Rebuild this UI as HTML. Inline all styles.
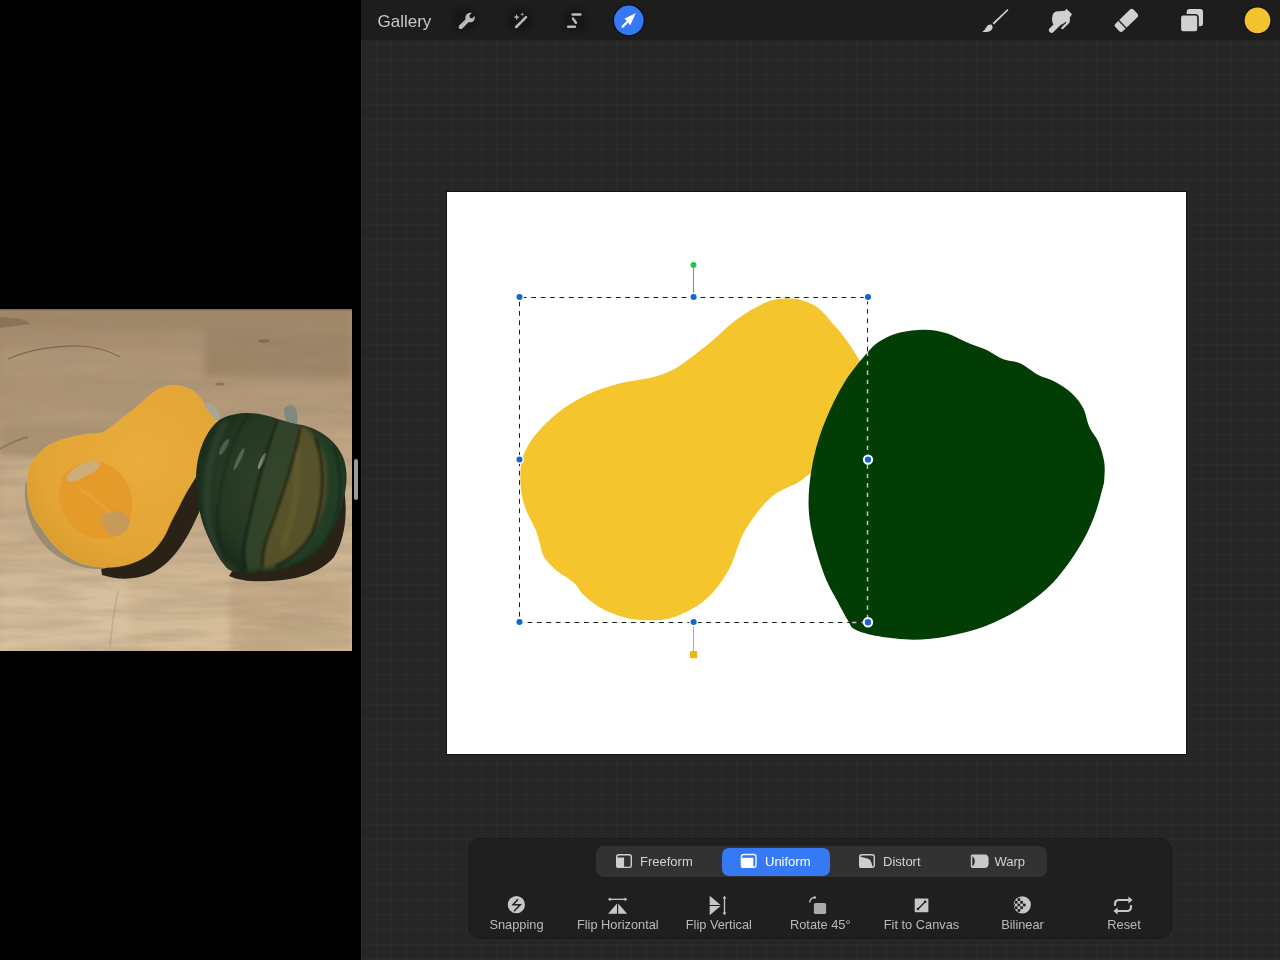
<!DOCTYPE html>
<html><head><meta charset="utf-8">
<style>
html,body{margin:0;padding:0;}
body{width:1280px;height:960px;background:#000;overflow:hidden;position:relative;font-family:"Liberation Sans",sans-serif;}
.abs{position:absolute;}
#app{left:361px;top:0;width:919px;height:960px;background-color:#262626;
background-image:linear-gradient(to right, rgba(255,255,255,0.022) 1px, transparent 1px),linear-gradient(to bottom, rgba(255,255,255,0.022) 1px, transparent 1px);
background-size:15px 15px;background-position:0 14px;}
#topbar{left:361px;top:0;width:919px;height:40px;background:#1d1d1d;}
#canvas{left:447px;top:192px;width:739px;height:562px;background:#fff;box-shadow:0 0 0 1px #121212;}
#panel{left:469px;top:839px;width:701.5px;height:99px;border-radius:12px;background:#1f1f1f;box-shadow:0 0 0 1px #1a1a1a;}
#seg{left:595.5px;top:845.5px;width:451px;height:31.5px;border-radius:8px;background:#323232;}
#pill{left:722px;top:847.5px;width:107.5px;height:28px;border-radius:7px;background:#3579f5;}
#photo{left:0;top:309px;width:352px;height:342px;overflow:hidden;}
#handle{left:354px;top:459px;width:4px;height:41px;border-radius:2px;background:#9b9b9b;}
svg.full{position:absolute;left:0;top:0;width:1280px;height:960px;}
</style></head>
<body>
<div id="photo" class="abs">
<svg width="352" height="342" viewBox="0 0 352 342">
<defs>
<linearGradient id="wood" x1="0" y1="0" x2="0.12" y2="1">
<stop offset="0" stop-color="#a4896b"/>
<stop offset="0.25" stop-color="#ae9373"/>
<stop offset="0.5" stop-color="#c2a684"/>
<stop offset="0.75" stop-color="#cdb390"/>
<stop offset="1" stop-color="#d6bd9a"/>
</linearGradient>
<filter id="b1"><feGaussianBlur stdDeviation="0.7"/></filter>
<filter id="b2"><feGaussianBlur stdDeviation="2"/></filter>
<filter id="b2s"><feGaussianBlur stdDeviation="1.1"/></filter>
<filter id="b3"><feGaussianBlur stdDeviation="3"/></filter>
<filter id="grain" x="0" y="0" width="100%" height="100%">
<feTurbulence type="fractalNoise" baseFrequency="0.012 0.09" numOctaves="3" seed="7" result="n"/>
<feColorMatrix in="n" type="matrix" values="0 0 0 0 0.35  0 0 0 0 0.27  0 0 0 0 0.18  0 0 0 1.6 -0.55"/>
</filter>
<radialGradient id="flesh" cx="0.6" cy="0.4" r="0.7">
<stop offset="0" stop-color="#e9ad3c"/>
<stop offset="0.75" stop-color="#e3a535"/>
<stop offset="1" stop-color="#da9b2e"/>
</radialGradient>
<radialGradient id="acg" cx="0.55" cy="0.45" r="0.6">
<stop offset="0" stop-color="#33432a"/>
<stop offset="0.7" stop-color="#243822"/>
<stop offset="1" stop-color="#182a18"/>
</radialGradient>
<clipPath id="acl"><path d="M228.0,107.0 C232.7,105.5 239.3,104.2 245.0,104.0 C250.7,103.8 256.5,104.5 262.0,105.5 C267.5,106.5 273.2,108.6 278.0,110.0 C282.8,111.4 286.3,112.8 291.0,114.0 C295.7,115.2 301.2,115.5 306.0,117.0 C310.8,118.5 315.5,120.3 320.0,123.0 C324.5,125.7 329.3,129.2 333.0,133.0 C336.7,136.8 339.8,141.5 342.0,146.0 C344.2,150.5 345.3,154.8 346.0,160.0 C346.7,165.2 346.7,171.0 346.0,177.0 C345.3,183.0 343.7,189.7 342.0,196.0 C340.3,202.3 338.5,209.2 336.0,215.0 C333.5,220.8 331.0,225.7 327.0,231.0 C323.0,236.3 317.5,242.7 312.0,247.0 C306.5,251.3 300.7,254.4 294.0,257.0 C287.3,259.6 279.3,261.3 272.0,262.5 C264.7,263.7 256.7,264.1 250.0,264.0 C243.3,263.9 236.7,263.8 232.0,262.0 C227.3,260.2 225.3,257.3 222.0,253.0 C218.7,248.7 215.2,242.3 212.0,236.0 C208.8,229.7 205.3,222.0 203.0,215.0 C200.7,208.0 199.2,200.7 198.0,194.0 C196.8,187.3 196.2,181.3 196.0,175.0 C195.8,168.7 196.2,162.0 197.0,156.0 C197.8,150.0 199.2,144.3 201.0,139.0 C202.8,133.7 205.3,128.3 208.0,124.0 C210.7,119.7 213.7,115.8 217.0,113.0 C220.3,110.2 223.3,108.5 228.0,107.0 Z"/></clipPath>
</defs>
<rect width="352" height="342" fill="url(#wood)"/>
<g filter="url(#b3)">
<path d="M0,0 L352,0 L352,22 L0,18 Z" fill="#9c8467" opacity="0.7"/>
<path d="M0,38 L200,42 L200,72 L0,68 Z" fill="#b39a7b" opacity="0.6"/>
<path d="M205,20 L352,24 L352,70 L205,66 Z" fill="#927a5d" opacity="0.6"/>
<path d="M0,78 L352,88 L352,108 L0,100 Z" fill="#ad9475" opacity="0.5"/>
<path d="M0,115 L120,118 L120,150 L0,146 Z" fill="#a28a6c" opacity="0.6"/>
<path d="M210,78 L352,82 L352,118 L210,112 Z" fill="#b59c7c" opacity="0.5"/>
<path d="M0,262 L130,264 L130,342 L0,342 Z" fill="#dcc6a6" opacity="0.5"/>
<path d="M230,270 L352,272 L352,342 L230,342 Z" fill="#b49772" opacity="0.45"/>
<path d="M0,150 L60,152 L60,240 L0,238 Z" fill="#d0b894" opacity="0.45"/>
</g>
<rect width="352" height="342" filter="url(#grain)" opacity="0.55"/>
<g filter="url(#b1)" fill="none" stroke="#6a553e" opacity="0.7">
<path d="M8,50 C30,40 60,36 80,37 C95,38 110,42 120,48" stroke-width="1.1"/>
<path d="M0,8 L22,10 L31,15 L0,19 Z" fill="#7a634a" stroke="none" opacity="0.8"/>
<ellipse cx="264" cy="32" rx="6" ry="1.8" fill="#6a553e" stroke="none" opacity="0.7"/><ellipse cx="220" cy="75" rx="5" ry="1.6" fill="#6a553e" stroke="none" opacity="0.7"/>
<path d="M0,140 C10,134 20,130 28,128" stroke-width="2" opacity="0.6"/>
<path d="M118,282 C114,300 112,318 110,338" stroke-width="1.6" opacity="0.25"/>
</g>
<!-- shadows -->
<path d="M204,146 C214,160 208,185 196,210 C184,236 170,256 150,265 C134,271 118,271 102,266 L100,250 L190,160 Z" fill="#2b2016" filter="url(#b1)"/>
<path d="M344,180 C348,205 345,230 334,248 C320,264 298,271 270,272 C254,273 240,272 229,267 L240,250 L330,200 Z" fill="#2b2016" filter="url(#b1)"/>
<!-- butternut rind -->
<path d="M27.5,173.0 C28.0,175.3 27.6,183.3 28.5,188.8 C29.4,194.3 30.6,200.6 33.0,206.0 C35.4,211.4 39.1,215.8 42.8,221.0 C46.4,226.2 50.3,232.3 55.0,237.0 C59.7,241.7 65.7,246.2 71.2,249.4 C76.7,252.6 82.0,254.5 88.0,256.0 C94.0,257.5 105.3,257.6 107.0,258.3 C108.7,259.0 102.2,260.1 98.0,260.0 C93.8,259.9 87.7,259.5 82.0,258.0 C76.3,256.5 69.8,254.2 64.0,251.0 C58.2,247.8 51.8,243.7 47.0,239.0 C42.2,234.3 38.2,228.5 35.0,223.0 C31.8,217.5 29.7,211.8 28.0,206.0 C26.3,200.2 25.4,193.2 25.0,188.0 C24.6,182.8 25.1,177.5 25.5,175.0 C25.9,172.5 27.0,170.7 27.5,173.0 Z" fill="#9a8b72" filter="url(#b1)"/>
<path d="M152.2,84.4 C156.6,81.3 160.4,79.2 164.4,77.9 C168.4,76.6 172.2,76.3 176.0,76.5 C179.8,76.7 183.6,77.7 187.0,79.0 C190.4,80.3 193.5,82.1 196.2,84.4 C198.9,86.7 200.8,90.0 203.0,93.0 C205.2,96.0 207.4,99.4 209.4,102.2 C211.4,105.0 213.6,107.5 215.0,109.7 C216.4,111.9 218.1,112.3 217.8,115.4 C217.5,118.4 215.0,122.4 213.0,128.0 C211.0,133.6 208.8,142.4 206.0,149.0 C203.2,155.6 199.3,161.6 196.0,167.4 C192.7,173.2 189.0,178.7 186.0,184.0 C183.0,189.3 180.7,194.3 178.0,199.5 C175.3,204.7 172.3,210.2 170.0,215.0 C167.7,219.8 166.6,223.7 163.9,228.0 C161.2,232.3 157.6,237.4 154.0,241.0 C150.4,244.6 147.2,246.9 142.5,249.4 C137.8,251.9 131.9,254.5 126.0,256.0 C120.1,257.5 113.3,258.3 107.0,258.3 C100.7,258.3 94.0,257.5 88.0,256.0 C82.0,254.5 76.7,252.6 71.2,249.4 C65.7,246.2 59.7,241.7 55.0,237.0 C50.3,232.3 46.4,226.2 42.8,221.0 C39.1,215.8 35.4,211.4 33.0,206.0 C30.6,200.6 29.4,194.3 28.5,188.8 C27.6,183.3 27.2,178.3 27.5,173.0 C27.8,167.7 27.5,162.4 30.0,157.0 C32.5,151.6 38.4,144.7 42.8,140.7 C47.1,136.7 51.3,135.1 56.0,133.0 C60.7,130.9 65.9,129.5 71.2,128.2 C76.5,126.9 82.7,125.9 88.0,125.0 C93.3,124.1 97.3,125.7 103.3,122.9 C109.3,120.0 118.2,112.3 124.0,107.9 C129.8,103.5 133.4,100.5 138.1,96.6 C142.8,92.7 147.8,87.5 152.2,84.4 Z" fill="url(#flesh)"/>
<path d="M152.2,84.4 C156.6,81.3 160.4,79.2 164.4,77.9 C168.4,76.6 172.2,76.3 176.0,76.5 C179.8,76.7 183.6,77.7 187.0,79.0 C190.4,80.3 193.5,82.1 196.2,84.4 C198.9,86.7 200.8,90.0 203.0,93.0 C205.2,96.0 207.4,99.4 209.4,102.2 C211.4,105.0 213.6,107.5 215.0,109.7 C216.4,111.9 218.1,112.3 217.8,115.4 C217.5,118.4 215.0,122.4 213.0,128.0 C211.0,133.6 208.8,142.4 206.0,149.0 C203.2,155.6 199.3,161.6 196.0,167.4 C192.7,173.2 189.0,178.7 186.0,184.0 C183.0,189.3 180.7,194.3 178.0,199.5 C175.3,204.7 172.3,210.2 170.0,215.0 C167.7,219.8 166.6,223.7 163.9,228.0 C161.2,232.3 157.6,237.4 154.0,241.0 C150.4,244.6 147.2,246.9 142.5,249.4 C137.8,251.9 131.9,254.5 126.0,256.0 C120.1,257.5 113.3,258.3 107.0,258.3 C100.7,258.3 94.0,257.5 88.0,256.0 C82.0,254.5 76.7,252.6 71.2,249.4 C65.7,246.2 59.7,241.7 55.0,237.0 C50.3,232.3 46.4,226.2 42.8,221.0 C39.1,215.8 35.4,211.4 33.0,206.0 C30.6,200.6 29.4,194.3 28.5,188.8 C27.6,183.3 27.2,178.3 27.5,173.0 C27.8,167.7 27.5,162.4 30.0,157.0 C32.5,151.6 38.4,144.7 42.8,140.7 C47.1,136.7 51.3,135.1 56.0,133.0 C60.7,130.9 65.9,129.5 71.2,128.2 C76.5,126.9 82.7,125.9 88.0,125.0 C93.3,124.1 97.3,125.7 103.3,122.9 C109.3,120.0 118.2,112.3 124.0,107.9 C129.8,103.5 133.4,100.5 138.1,96.6 C142.8,92.7 147.8,87.5 152.2,84.4 Z" fill="none" stroke="#e4b040" stroke-width="1" opacity="0.6"/>
<!-- seed cavity -->
<g filter="url(#b1)">
<path d="M62,170 C68,156 88,150 104,154 C122,160 134,178 132,200 C130,220 118,232 100,230 C82,228 64,214 60,196 C58,186 59,178 62,170 Z" fill="#e49a2a" opacity="0.9"/>
<path d="M66,168 C74,156 90,150 100,154 C102,160 92,164 80,170 C74,174 68,174 66,168 Z" fill="#c9b08a" opacity="0.85"/>
<path d="M100,208 C110,198 124,200 130,210 C130,222 120,230 108,226 Z" fill="#bf9a66" opacity="0.75"/>
<path d="M78,178 C90,186 100,196 112,204" stroke="#f0b050" stroke-width="3" fill="none" opacity="0.35"/>

</g>
<!-- stems -->
<path d="M207,93 C212,94 218,100 220,106 C221,110 219,112 216,111 C212,108 209,103 205,98 Z" fill="#a8a696" filter="url(#b1)"/>
<path d="M284,100 C286,96 292,95 295,98 C298,104 298,110 297,115 L287,115 C285,110 284,104 284,100 Z" fill="#7f8a7e" filter="url(#b1)"/>
<!-- acorn -->
<path d="M228.0,107.0 C232.7,105.5 239.3,104.2 245.0,104.0 C250.7,103.8 256.5,104.5 262.0,105.5 C267.5,106.5 273.2,108.6 278.0,110.0 C282.8,111.4 286.3,112.8 291.0,114.0 C295.7,115.2 301.2,115.5 306.0,117.0 C310.8,118.5 315.5,120.3 320.0,123.0 C324.5,125.7 329.3,129.2 333.0,133.0 C336.7,136.8 339.8,141.5 342.0,146.0 C344.2,150.5 345.3,154.8 346.0,160.0 C346.7,165.2 346.7,171.0 346.0,177.0 C345.3,183.0 343.7,189.7 342.0,196.0 C340.3,202.3 338.5,209.2 336.0,215.0 C333.5,220.8 331.0,225.7 327.0,231.0 C323.0,236.3 317.5,242.7 312.0,247.0 C306.5,251.3 300.7,254.4 294.0,257.0 C287.3,259.6 279.3,261.3 272.0,262.5 C264.7,263.7 256.7,264.1 250.0,264.0 C243.3,263.9 236.7,263.8 232.0,262.0 C227.3,260.2 225.3,257.3 222.0,253.0 C218.7,248.7 215.2,242.3 212.0,236.0 C208.8,229.7 205.3,222.0 203.0,215.0 C200.7,208.0 199.2,200.7 198.0,194.0 C196.8,187.3 196.2,181.3 196.0,175.0 C195.8,168.7 196.2,162.0 197.0,156.0 C197.8,150.0 199.2,144.3 201.0,139.0 C202.8,133.7 205.3,128.3 208.0,124.0 C210.7,119.7 213.7,115.8 217.0,113.0 C220.3,110.2 223.3,108.5 228.0,107.0 Z" fill="url(#acg)"/>
<g clip-path="url(#acl)">
<g filter="url(#b2)">
<path d="M277.0,111.0 C282.7,106.3 297.3,112.7 300.0,119.0 C302.7,125.3 296.0,138.3 293.0,149.0 C290.0,159.7 286.2,170.7 282.0,183.0 C277.8,195.3 271.3,210.7 268.0,223.0 C264.7,235.3 265.7,251.0 262.0,257.0 C258.3,263.0 248.7,264.7 246.0,259.0 C243.3,253.3 244.3,235.7 246.0,223.0 C247.7,210.3 252.7,195.7 256.0,183.0 C259.3,170.3 262.5,159.0 266.0,147.0 C269.5,135.0 271.3,115.7 277.0,111.0 Z" fill="#34442a" opacity="0.85"/>
<path d="M300.0,119.0 C303.7,115.5 310.8,122.3 315.0,128.0 C319.2,133.7 323.3,142.5 325.0,153.0 C326.7,163.5 327.0,179.3 325.0,191.0 C323.0,202.7 317.8,214.0 313.0,223.0 C308.2,232.0 302.2,239.3 296.0,245.0 C289.8,250.7 281.7,255.0 276.0,257.0 C270.3,259.0 263.3,262.7 262.0,257.0 C260.7,251.3 264.7,235.3 268.0,223.0 C271.3,210.7 277.8,195.3 282.0,183.0 C286.2,170.7 290.0,159.7 293.0,149.0 C296.0,138.3 296.3,122.5 300.0,119.0 Z" fill="#5e5529" opacity="0.85"/>
<path d="M315.0,128.0 C316.3,125.3 328.5,131.5 333.0,137.0 C337.5,142.5 340.3,151.2 342.0,161.0 C343.7,170.8 344.3,186.0 343.0,196.0 C341.7,206.0 338.2,213.2 334.0,221.0 C329.8,228.8 323.7,237.7 318.0,243.0 C312.3,248.3 307.0,250.7 300.0,253.0 C293.0,255.3 276.7,258.3 276.0,257.0 C275.3,255.7 289.8,250.7 296.0,245.0 C302.2,239.3 308.2,232.0 313.0,223.0 C317.8,214.0 323.0,202.7 325.0,191.0 C327.0,179.3 326.7,163.5 325.0,153.0 C323.3,142.5 313.7,130.7 315.0,128.0 Z" fill="#22402a" opacity="0.6"/>
<path d="M226,112 C210,140 204,175 208,212 C212,238 222,254 236,264" stroke="#3d4f40" stroke-width="6" fill="none" opacity="0.5"/>
<path d="M296,140 C300,170 295,205 282,238" stroke="#7a6a34" stroke-width="5" fill="none" opacity="0.45"/>
</g>
<g filter="url(#b1)">
<ellipse cx="262" cy="152" rx="2" ry="9" transform="rotate(25 262 152)" fill="#c0c8c0" opacity="0.6"/>
<ellipse cx="239" cy="150" rx="2" ry="12" transform="rotate(25 239 150)" fill="#8c9a98" opacity="0.45"/>
<ellipse cx="224" cy="138" rx="2.5" ry="9" transform="rotate(30 224 138)" fill="#7e8e8c" opacity="0.45"/>
</g>
<g filter="url(#b2s)" fill="none" stroke="#0c170c" opacity="0.7">
<path d="M277,112 C266,140 256,180 246,225 C242,245 244,255 246,260" stroke-width="2.2"/>
<path d="M300,119 C294,150 283,185 268,225 C262,240 262,252 262,258" stroke-width="2.4"/>
<path d="M315,128 C325,152 325,190 313,223 C304,240 292,250 276,257" stroke-width="2.4"/>
<path d="M333,137 C344,165 342,200 330,225 C320,242 306,252 292,258" stroke-width="1.8" opacity="0.7"/>
<path d="M248,106 C232,130 222,165 218,200 C216,220 220,240 226,252" stroke-width="1.6" opacity="0.5"/>
</g>
</g>
<rect x="0" y="0" width="352" height="1.5" fill="#6a5a48" opacity="0.6"/>
</svg>
</div>
<div id="handle" class="abs"></div>
<div id="app" class="abs"></div>
<div id="topbar" class="abs"></div>
<div id="canvas" class="abs"></div>
<div id="panel" class="abs"></div>
<div id="seg" class="abs"></div>
<div id="pill" class="abs"></div>

<svg class="full" viewBox="0 0 1280 960">
<!-- canvas shapes -->
<path d="M520.3,478.3 C520.3,472.0 520.5,465.4 522.2,459.3 C523.9,453.2 526.5,447.6 530.3,441.7 C534.1,435.8 539.6,429.7 545.2,424.1 C550.8,418.5 556.4,413.1 564.1,407.9 C571.8,402.7 582.1,397.0 591.2,393.0 C600.3,389.0 611.0,385.9 618.8,383.8 C626.5,381.6 631.2,381.2 637.5,380.0 C643.8,378.8 650.0,378.1 656.2,376.2 C662.5,374.4 668.8,372.2 675.0,368.8 C681.2,365.3 687.5,360.3 693.8,355.6 C700.0,350.9 706.2,345.9 712.5,340.6 C718.8,335.3 725.0,328.8 731.2,323.8 C737.5,318.8 743.8,314.4 750.0,310.6 C756.2,306.9 763.1,303.3 768.8,301.2 C774.4,299.2 778.8,298.7 783.8,298.4 C788.8,298.1 793.8,298.3 798.8,299.4 C803.8,300.5 809.4,302.5 813.8,305.0 C818.1,307.5 821.6,311.0 825.0,314.4 C828.4,317.8 831.7,322.5 834.4,325.6 C837.1,328.7 838.4,329.7 841.0,333.0 C843.6,336.3 847.0,340.8 850.0,345.2 C853.0,349.6 856.1,354.3 858.8,359.3 C861.5,364.3 865.5,366.6 866.0,375.0 C866.5,383.4 865.5,398.3 862.0,410.0 C858.5,421.7 851.2,435.7 845.0,445.0 C838.8,454.3 831.0,461.1 825.0,466.0 C819.0,470.9 813.7,471.5 809.0,474.4 C804.3,477.3 802.4,480.0 796.8,483.2 C791.2,486.4 782.1,489.1 775.6,493.8 C769.1,498.5 763.2,505.0 757.9,511.5 C752.6,518.0 747.2,526.3 743.7,532.8 C740.2,539.3 739.0,544.6 736.6,550.5 C734.2,556.4 733.1,561.7 729.6,568.2 C726.1,574.7 720.7,583.2 715.4,589.4 C710.1,595.6 704.9,600.7 697.7,605.4 C690.5,610.1 679.8,615.1 672.4,617.6 C665.0,620.1 660.2,620.1 653.4,620.3 C646.6,620.5 638.6,620.1 631.8,619.0 C625.0,617.9 618.7,615.9 612.8,613.6 C606.9,611.4 601.5,608.7 596.6,605.5 C591.7,602.3 586.7,598.2 583.1,594.6 C579.5,591.0 578.2,586.9 575.0,583.8 C571.8,580.6 567.5,578.2 564.1,575.7 C560.7,573.2 558.1,572.1 554.7,568.9 C551.3,565.7 546.3,561.0 543.8,556.7 C541.3,552.4 541.1,547.7 539.8,543.2 C538.4,538.7 537.7,534.7 535.7,529.7 C533.7,524.7 529.9,518.8 527.6,513.4 C525.4,508.0 523.4,503.0 522.2,497.2 C521.0,491.4 520.3,484.6 520.3,478.3 Z" fill="#f4c52c"/>
<path d="M900.0,332.5 C907.2,330.8 917.2,329.6 925.0,329.7 C932.8,329.8 940.3,331.4 946.7,333.3 C953.1,335.2 958.9,338.9 963.3,340.8 C967.7,342.8 969.4,343.5 973.3,345.0 C977.2,346.5 981.7,347.6 986.7,350.0 C991.7,352.4 997.8,357.0 1003.3,359.2 C1008.8,361.4 1014.2,360.7 1020.0,363.3 C1025.8,365.9 1032.5,371.9 1038.3,375.0 C1044.1,378.1 1049.4,378.6 1055.0,381.7 C1060.6,384.8 1067.0,388.9 1071.7,393.3 C1076.4,397.7 1080.4,402.7 1083.3,408.3 C1086.2,413.9 1086.7,421.1 1089.2,426.7 C1091.7,432.3 1095.8,435.9 1098.3,441.7 C1100.8,447.5 1103.2,455.3 1104.2,461.7 C1105.2,468.1 1104.5,475.6 1104.2,480.0 C1103.9,484.4 1103.9,483.0 1102.5,488.4 C1101.1,493.8 1098.5,504.5 1095.6,512.5 C1092.7,520.5 1089.9,528.0 1085.3,536.6 C1080.7,545.2 1074.4,555.4 1068.1,564.0 C1061.8,572.6 1055.5,580.6 1047.5,588.1 C1039.5,595.6 1030.3,602.5 1020.0,608.8 C1009.7,615.1 997.6,621.4 985.6,626.0 C973.6,630.6 959.8,634.0 947.8,636.3 C935.8,638.6 924.9,639.7 913.4,639.7 C901.9,639.7 888.7,638.0 879.0,636.3 C869.3,634.6 860.1,632.0 855.0,629.4 C849.9,626.8 851.0,625.4 848.1,620.8 C845.2,616.2 841.8,609.6 837.8,601.9 C833.8,594.2 828.4,585.9 824.1,574.4 C819.8,562.9 814.6,545.7 812.0,533.1 C809.4,520.5 808.3,511.4 808.6,498.8 C808.9,486.2 810.9,470.7 813.8,457.5 C816.7,444.3 820.6,432.3 825.8,419.7 C830.9,407.1 837.5,393.3 844.7,381.9 C851.9,370.4 862.6,358.0 868.8,351.0 C875.0,344.0 876.8,343.1 882.0,340.0 C887.2,336.9 892.8,334.2 900.0,332.5 Z" fill="#023d05"/>
<!-- selection -->
<g fill="none" stroke-width="1">
<rect x="519.5" y="297.5" width="348" height="325" stroke="rgba(225,255,225,0.8)" stroke-width="1.4" stroke-dasharray="4.7 4.7" stroke-dashoffset="2.3"/>
<rect x="519.5" y="297.5" width="348" height="325" stroke="#1c1c1c" stroke-dasharray="4.7 4.7" stroke-dashoffset="7"/>
</g>
<line x1="693.5" y1="265" x2="693.5" y2="297" stroke="#5aa85a" stroke-width="1"/>
<line x1="693.5" y1="622" x2="693.5" y2="652" stroke="#d9ae22" stroke-width="1"/>
<circle cx="693.5" cy="265" r="3" fill="#2cc24e"/>
<rect x="690" y="651" width="7.2" height="7.2" rx="1" fill="#f0b80c"/>
<g fill="#1566d0" stroke="#fff" stroke-width="1.5">
<circle cx="519.5" cy="297" r="3.8"/>
<circle cx="693.6" cy="297" r="3.8"/>
<circle cx="868" cy="297" r="3.8"/>
<circle cx="519.5" cy="459.5" r="3.8"/>
<circle cx="519.5" cy="622" r="3.8"/>
<circle cx="693.6" cy="622" r="3.8"/>
</g>
<g fill="#1566d0" stroke="#fff" stroke-width="2">
<circle cx="868" cy="459.6" r="4.2"/>
<circle cx="868" cy="622.3" r="4.2"/>
</g>

<!-- top bar -->
<text x="377.5" y="26.6" font-family="Liberation Sans" font-size="17" fill="#c9c9c9">Gallery</text>
<defs><filter id="cb"><feGaussianBlur stdDeviation="1.5"/></filter></defs>
<g fill="#151515" filter="url(#cb)">
<circle cx="465" cy="20" r="12.5"/>
<circle cx="520" cy="20" r="12.5"/>
<circle cx="574.5" cy="20.5" r="12.5"/>
</g>
<circle cx="628.8" cy="20.4" r="16" fill="#0d0f14"/>
<circle cx="628.8" cy="20.4" r="14.8" fill="#3579f4"/>
<!-- wrench -->
<g fill="#b9b9b9">
<path d="M459.2,25.6 L465.6,19.2 C465,17.1 465.6,14.9 467.4,13.7 C468.8,12.8 470.4,12.6 471.8,13.1 L469.3,15.6 L469.9,17.8 L472.2,18.4 L474.6,16 C475.1,17.4 474.9,19.1 474,20.4 C472.8,22 470.7,22.6 468.8,22.1 L462.4,28.5 C461.6,29.3 460.1,29.3 459.2,28.5 C458.4,27.7 458.4,26.4 459.2,25.6 Z"/>
</g>
<!-- magic wand -->
<g stroke="#b9b9b9" stroke-linecap="round" fill="none">
<line x1="516.2" y1="27" x2="520.8" y2="22.4" stroke-width="2.6"/>
<line x1="522.2" y1="21" x2="526" y2="17.2" stroke-width="2.6"/>
</g>
<g fill="#b9b9b9">
<path d="M516.6,14 L517.4,16.3 L519.7,17.1 L517.4,17.9 L516.6,20.2 L515.8,17.9 L513.5,17.1 L515.8,16.3 Z"/>
<path d="M522.2,12.2 L522.7,13.7 L524.2,14.2 L522.7,14.7 L522.2,16.2 L521.7,14.7 L520.2,14.2 L521.7,13.7 Z"/>
</g>
<!-- selection S -->
<g fill="#b9b9b9">
<rect x="571.4" y="13.3" width="10.2" height="2.5" rx="1.25"/>
<rect x="566.9" y="25.5" width="9.2" height="2.5" rx="1.25"/>
</g>
<line x1="573" y1="18.6" x2="575.9" y2="22.8" stroke="#b9b9b9" stroke-width="2.5" stroke-linecap="round"/>
<!-- arrow -->
<path d="M635.9,13.1 L624.4,18.8 L627.6,21.4 L630.2,25.4 Z" fill="#fff"/>
<line x1="628.6" y1="20.6" x2="622.6" y2="26.6" stroke="#fff" stroke-width="2.2" stroke-linecap="round"/>

<!-- right tools -->
<g fill="#d0d0d0">
<!-- brush -->
<path d="M1007,9.4 C1007.8,8.8 1008.6,9.6 1008.1,10.4 L994,24.4 L992.6,23 Z"/>
<path d="M991.6,24.8 C993.2,26.4 993,29.2 990.6,30.8 C988.6,32.2 985.2,32.4 982.2,31.8 C984.6,30.6 985.4,28.6 986.6,26.8 C987.8,25 990,24 991.6,24.8 Z"/>
<!-- smudge -->
<path d="M1056,11.5 L1065,10.8 L1066.4,8.8 L1072,14.2 L1069.8,17.5 L1069.8,21 L1060,25 L1053.4,24.6 C1052,22 1051.8,19.5 1052.2,17 C1052.6,14 1054,12 1056,11.5 Z"/>
</g>
<g stroke="#d0d0d0" stroke-linecap="round" fill="none">
<line x1="1051.6" y1="30.2" x2="1059.2" y2="22.6" stroke-width="5.4"/>
<line x1="1062.4" y1="27.4" x2="1068" y2="21.8" stroke-width="3.4"/>
</g>
<line x1="1058.6" y1="29.6" x2="1066" y2="22.2" stroke="#1d1d1d" stroke-width="1.2"/>
<!-- eraser -->
<g transform="translate(1126.4 20.4) rotate(-44)">
<rect x="-12.6" y="-5.3" width="25.2" height="10.6" rx="2.8" fill="#d0d0d0"/>
<line x1="-5.6" y1="-5.6" x2="-5.6" y2="5.6" stroke="#1d1d1d" stroke-width="1.3"/>
</g>
<!-- layers -->
<rect x="1186.7" y="9" width="16.3" height="17.3" rx="2.8" fill="#d0d0d0"/>
<rect x="1180.3" y="14.7" width="17.7" height="17.3" rx="2.8" fill="#d0d0d0" stroke="#1d1d1d" stroke-width="1.6"/>
<circle cx="1257.5" cy="20.4" r="13.6" fill="#f3c22f" stroke="#151515" stroke-width="1.5"/>

<!-- segmented icons -->
<g fill="none" stroke="#cfcfcf" stroke-width="1.4">
<rect x="616.7" y="854.8" width="14.6" height="12.6" rx="2.2"/>
<rect x="741.4" y="854.5" width="14.6" height="12.8" rx="2.2" stroke="#f2f6ff"/>
<rect x="859.7" y="854.7" width="14.6" height="12.6" rx="2.2"/>
</g>
<rect x="616.7" y="857.5" width="7.4" height="10.2" fill="#cfcfcf"/>
<rect x="741.4" y="857.8" width="12" height="10.2" fill="#fff"/>
<path d="M859.7,856.4 L868.2,858.8 C870.6,859.6 871.9,862.6 872.4,868 L859.7,868 Z" fill="#cfcfcf"/>
<path d="M972.6,854.4 L985,854.4 C987.2,854.4 988.6,856 988.6,858.8 L988.6,863.5 C988.6,866.3 987.2,867.9 985,867.9 L972.6,867.9 C971.4,867.9 970.8,867.3 970.8,866.2 L970.8,856.1 C970.8,855 971.4,854.4 972.6,854.4 Z" fill="#c9c9c9"/>
<path d="M972.3,856.2 C975.6,858.2 975.6,864.2 972.3,866.2 Z" fill="#2a2a2a"/>
<g font-family="Liberation Sans" font-size="13" fill="#d2d2d2">
<text x="640" y="866.3">Freeform</text>
<text x="765" y="866.3" fill="#fff">Uniform</text>
<text x="883" y="866.3">Distort</text>
<text x="994.5" y="866.3">Warp</text>
</g>

<!-- bottom row -->
<g font-family="Liberation Sans" font-size="12.8" fill="#bababa" text-anchor="middle">
<text x="516.5" y="929">Snapping</text>
<text x="617.8" y="929">Flip Horizontal</text>
<text x="718.8" y="929">Flip Vertical</text>
<text x="820.3" y="929">Rotate 45°</text>
<text x="921.5" y="929">Fit to Canvas</text>
<text x="1022.5" y="929">Bilinear</text>
<text x="1124" y="929">Reset</text>
</g>
<g fill="#c6c6c6">
<circle cx="516.4" cy="904.7" r="8.6"/>
<path d="M608,913.8 L617,903.6 L617,913.8 Z M618.2,903.6 L627.2,913.8 L618.2,913.8 Z"/>
<path d="M709.7,895.8 L720.6,905 L709.7,905 Z M709.7,906 L720.6,906 L709.7,915.3 Z"/>
<rect x="813.9" y="903" width="12.2" height="11.1" rx="1.6" fill="#ababab"/>
<rect x="914.7" y="898.6" width="13.7" height="13.6" rx="1"/>
<circle cx="1022.3" cy="904.8" r="8.6"/>
</g>
<path d="M518,899.2 L513,904.8 L520.2,904.8 L514,911.2" stroke="#1f1f1f" stroke-width="1.5" fill="none" stroke-linejoin="miter"/>
<g stroke="#c6c6c6" stroke-width="1.3" fill="none">
<line x1="609.5" y1="899.3" x2="625.7" y2="899.3"/>
<line x1="724.5" y1="897.5" x2="724.5" y2="913.6"/>
<path d="M809.6,902.4 C810.2,899.6 812,897.6 814.6,897.4" stroke-width="1.4"/>
</g>
<g fill="#c6c6c6">
<path d="M607.8,899.3 L610.6,897.4 L610.6,901.2 Z M627.4,899.3 L624.6,897.4 L624.6,901.2 Z"/>
<path d="M724.5,895.8 L722.6,898.6 L726.4,898.6 Z M724.5,915.3 L722.6,912.5 L726.4,912.5 Z"/>
<circle cx="814.8" cy="897.4" r="1.2"/>
</g>
<line x1="918" y1="909" x2="925.2" y2="901.8" stroke="#1f1f1f" stroke-width="1.3"/>
<g fill="#1f1f1f">
<circle cx="918" cy="909" r="1.3"/><circle cx="925.2" cy="901.8" r="1.3"/>
</g>
<defs><clipPath id="bcl"><circle cx="1022.3" cy="904.8" r="8.6"/></clipPath></defs>
<g fill="#1f1f1f" clip-path="url(#bcl)"><rect x="1017.55" y="898.25" width="2.7" height="2.7"/><rect x="1014.85" y="900.95" width="2.7" height="2.7"/><rect x="1020.25" y="900.95" width="2.7" height="2.7"/><rect x="1017.55" y="903.65" width="2.7" height="2.7"/><rect x="1022.95" y="903.65" width="2.7" height="2.7"/><rect x="1014.85" y="906.35" width="2.7" height="2.7"/><rect x="1020.25" y="906.35" width="2.7" height="2.7"/><rect x="1017.55" y="909.05" width="2.7" height="2.7"/><rect x="1012.15" y="903.65" width="2.7" height="2.7"/></g>
<!-- reset -->
<g stroke="#c6c6c6" stroke-width="2.2" fill="none" stroke-linecap="round">
<path d="M1129.6,900 L1119.2,900 C1116.6,900 1115,901.6 1115,904 L1115,905"/>
<path d="M1116.4,911 L1126.8,911 C1129.4,911 1131,909.4 1131,907 L1131,906"/>
</g>
<g fill="#c6c6c6">
<path d="M1132.6,900 L1128.4,896.4 L1128.4,903.6 Z"/>
<path d="M1113.4,911 L1117.6,907.4 L1117.6,914.6 Z"/>
</g>
</svg>
</body></html>
